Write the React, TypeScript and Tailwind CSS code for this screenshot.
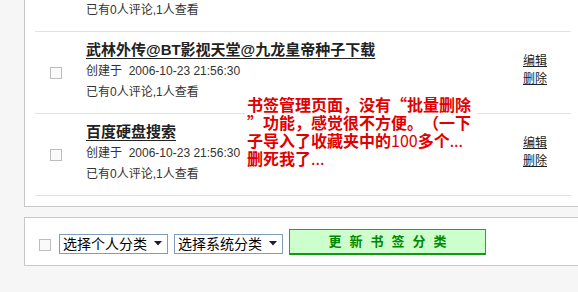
const font = "font-['Liberation_Sans','Noto_Sans_CJK_SC',sans-serif]";

function Box() {
  return <div className="w-[12px] h-[12px] border border-[#bdbdbd] bg-[#fafafa]"></div>;
}

function Select({ label }: { label: string }) {
  return (
    <div className="w-[109px] h-[20px] border border-[#7f9db9] bg-white flex items-center justify-between pl-[3px] pr-[5px]">
      <span className="text-[14px] leading-[18px] text-black">{label}</span>
      <svg width="8" height="5" viewBox="0 0 8 5">
        <path d="M0 0 H8 L4 4.5 Z" fill="#1a1a3a" />
      </svg>
    </div>
  );
}

interface RowProps {
  title: string;
}

function BookmarkRow({ title }: RowProps) {
  return (
    <div className="h-[82px] border-b border-[#e2e2e2] flex items-center">
      <div className="w-[51px] pl-[15px] flex items-center">
        <Box />
      </div>
      <div className="flex-1 self-start pt-[7px] text-[#333]">
        <div className="h-[22px] leading-[22px] text-[15px] font-bold text-[#222] underline underline-offset-[3px]">
          {title}
        </div>
        <div className="h-[21px] leading-[21px] text-[12px]">创建于&nbsp; 2006-10-23 21:56:30</div>
        <div className="h-[20px] leading-[20px] text-[12px]">已有0人评论,1人查看</div>
      </div>
      <div className="w-[48px] flex flex-col text-[12px] leading-[18px] text-[#222] mb-[5px]">
        <span className="underline">编辑</span>
        <span className="underline">删除</span>
      </div>
    </div>
  );
}

export default function App() {
  return (
    <div className={`w-[578px] h-[292px] bg-[#f6f6f6] overflow-hidden relative ${font}`}>
      <div className="ml-[24px] w-[600px] bg-white border-l border-b border-[#c9c9c9] pl-[10px] pb-[10px]">
        <div className="w-[536px]">
          <div className="h-[32px] border-b border-[#e2e2e2] pl-[51px] text-[12px] leading-[20px] text-[#333]">
            已有0人评论,1人查看
          </div>
          <BookmarkRow title="武林外传@BT影视天堂@九龙皇帝种子下载" />
          <BookmarkRow title="百度硬盘搜索" />
        </div>
      </div>

      <div className="mt-[10px] ml-[24px] w-[600px] h-[49px] bg-white border-l border-t border-b border-[#c9c9c9] flex items-center pl-[14px] pt-[1px]">
        <div className="mt-[6px]">
          <Box />
        </div>
        <div className="ml-[8px] mt-[3px] flex gap-[6px]">
          <Select label="选择个人分类" />
          <Select label="选择系统分类" />
        </div>
        <div className="ml-[6px] w-[197px] h-[26px] bg-[#ccffcc] border border-[#1faa1f] border-b-2 border-b-[#119911] flex items-center justify-center gap-[8px] text-[13px] font-bold text-[#008800]">
          <span>更</span>
          <span>新</span>
          <span>书</span>
          <span>签</span>
          <span>分</span>
          <span>类</span>
        </div>
      </div>

      <div className="absolute left-[245px] top-[95px] bg-white pl-[2px] pr-[6px] font-['Noto_Sans_CJK_SC',sans-serif] text-[16px] leading-[18px] font-bold text-[#e00000] [text-spacing-trim:space-all]">
        <div>书签管理页面，没有“批量删除</div>
        <div>”功能，感觉很不方便。（一下</div>
        <div>
          子导入了收藏夹中的<span className="font-normal">100</span>多个<span className="font-normal">...</span>
        </div>
        <div>
          删死我了<span className="font-normal">...</span>
        </div>
      </div>
    </div>
  );
}
